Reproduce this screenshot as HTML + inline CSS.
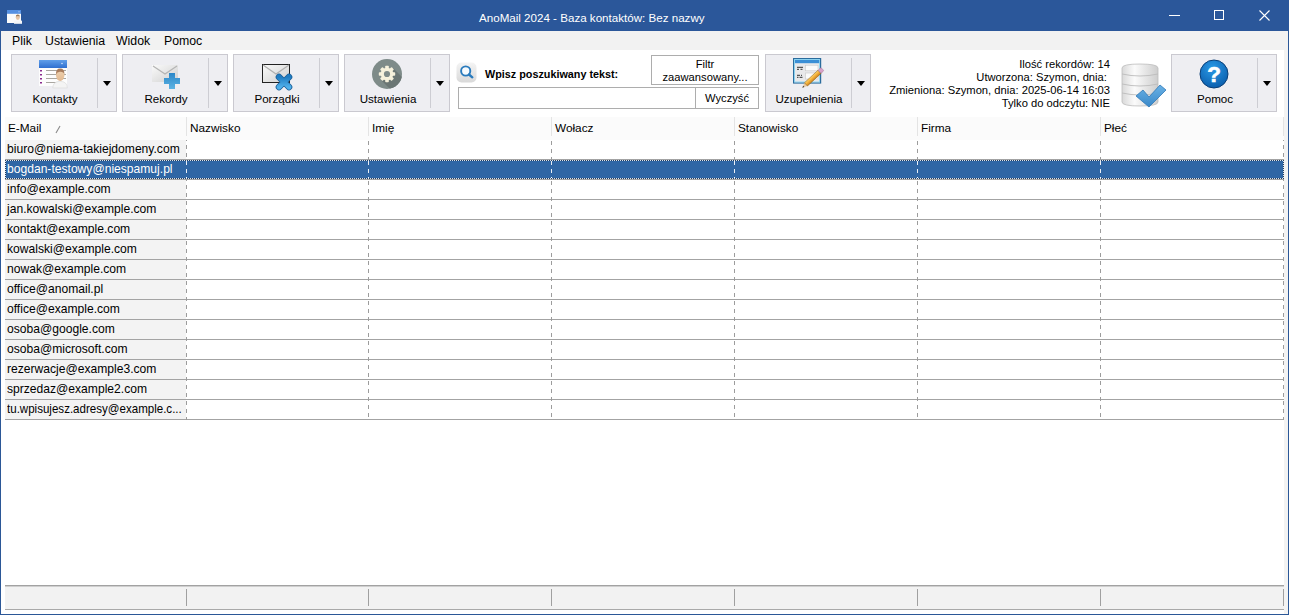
<!DOCTYPE html>
<html><head><meta charset="utf-8">
<style>
*{margin:0;padding:0;box-sizing:border-box}
html,body{width:1289px;height:615px;overflow:hidden;background:#fff;font-family:"Liberation Sans",sans-serif;color:#000}
.a{position:absolute}
#win{position:absolute;left:0;top:0;width:1289px;height:615px;background:#fff;border-left:1px solid #2b5797;border-right:1px solid #2b5797;border-bottom:1px solid #2b5797}
#title{left:0;top:0;width:1289px;height:31px;background:#2b579a}
.tt{color:#fff;font-size:11.6px;white-space:nowrap}
#menu{left:1px;top:31px;width:1287px;height:19px;background:#f2f2f2}
.mi{font-size:12.3px;top:2.5px;white-space:nowrap}
#tool{left:1px;top:50px;width:1283px;height:66px;background:#fff}
.btn{position:absolute;top:54px;width:106px;height:58px;background:#eeeef2;border:1px solid #cac9d0}
.btn .sep{position:absolute;left:85px;top:3px;width:1px;height:50px;background:#cdcdd3}
.btn .arr{position:absolute;left:90.5px;top:26px;width:0;height:0;border-left:4.5px solid transparent;border-right:4.5px solid transparent;border-top:5px solid #000}
.btn .lbl{position:absolute;left:0;width:86px;top:36.5px;text-align:center;font-size:11.6px;white-space:nowrap}
.btn svg{position:absolute}
.info{font-size:11.2px;text-align:right;white-space:nowrap;line-height:13px}
.grid{left:5px;top:117px;width:1279px}
.hdr{position:absolute;top:0;height:23px;background:#fcfcfc}
.ht{position:absolute;font-size:11.8px;top:4px;white-space:nowrap}
.row{position:absolute;left:5px;width:1279px;height:20px}
.cell{position:absolute;font-size:12.1px;white-space:nowrap}
</style></head><body>
<div id="win"></div>
<div id="title" class="a">
  <svg class="a" style="left:7px;top:10px" width="16" height="15" viewBox="0 0 16 15">
    <rect x="0" y="0" width="14" height="13" fill="#fbfbfb"/>
    <rect x="0" y="0" width="14" height="3.8" fill="#5590e2"/>
    <rect x="11.5" y="1.3" width="1" height="1" fill="#cfe0f8"/>
    <ellipse cx="10.8" cy="7.3" rx="2" ry="2.6" fill="#e6c4a4"/>
    <path d="M8.8 6.6 Q8.8 4.5 10.8 4.5 Q12.8 4.5 12.8 6.6 Q11 5.6 8.8 6.6Z" fill="#9a7a5a"/>
    <rect x="7" y="10.6" width="8" height="3.2" fill="#f4f6f8"/>
  </svg>
  <div class="a tt" style="left:479px;top:11px">AnoMail 2024 - Baza kontaktów: Bez nazwy</div>
  <div class="a" style="left:1169px;top:15px;width:11px;height:1px;background:#fff"></div>
  <div class="a" style="left:1214px;top:10px;width:10px;height:10px;border:1px solid #fff"></div>
  <svg class="a" style="left:1259px;top:10px" width="11" height="11" viewBox="0 0 11 11"><path d="M0.5 0.5L10.5 10.5M10.5 0.5L0.5 10.5" stroke="#fff" stroke-width="1.1"/></svg>
</div>
<div id="menu" class="a">
  <div class="a mi" style="left:11px">Plik</div>
  <div class="a mi" style="left:44px">Ustawienia</div>
  <div class="a mi" style="left:115px">Widok</div>
  <div class="a mi" style="left:163px">Pomoc</div>
</div>
<div id="tool" class="a"></div>

<div class="btn" style="left:11px"><div class="sep"></div><div class="arr"></div><div class="lbl">Kontakty</div></div>
<div class="btn" style="left:122px"><div class="sep"></div><div class="arr"></div><div class="lbl">Rekordy</div></div>
<div class="btn" style="left:233px"><div class="sep"></div><div class="arr"></div><div class="lbl">Porządki</div></div>
<div class="btn" style="left:344px"><div class="sep"></div><div class="arr"></div><div class="lbl">Ustawienia</div></div>
<div class="btn" style="left:765px"><div class="sep"></div><div class="arr"></div><div class="lbl">Uzupełnienia</div></div>
<div class="btn" style="left:1171px"><div class="sep"></div><div class="arr"></div><div class="lbl">Pomoc</div></div>

<!-- Kontakty icon -->
<svg class="a" style="left:38px;top:59px" width="32" height="32" viewBox="0 0 32 32">
  <defs><linearGradient id="kb" x1="0" y1="0" x2="0" y2="1"><stop offset="0" stop-color="#619fe9"/><stop offset="1" stop-color="#2f6fd0"/></linearGradient>
  <linearGradient id="face" x1="0" y1="0" x2="0" y2="1"><stop offset="0" stop-color="#efd2b0"/><stop offset="1" stop-color="#e2b991"/></linearGradient></defs>
  <rect x="1" y="1" width="28" height="8" fill="url(#kb)"/>
  <circle cx="24" cy="4.5" r="0.8" fill="#cfe2fa"/>
  <rect x="1" y="9" width="28" height="18" fill="#fdfdfd"/>
  <g fill="#8a2a8e"><rect x="2" y="11" width="2" height="1.5"/><rect x="2" y="15" width="2" height="1.5"/><rect x="2" y="19" width="2" height="1.5"/><rect x="2" y="23" width="2" height="1.5"/></g>
  <g fill="#a9a6a0"><rect x="8" y="11" width="20" height="1"/><rect x="8" y="15" width="20" height="1"/><rect x="8" y="19" width="20" height="1"/><rect x="8" y="23" width="12" height="1"/></g>
  <path d="M14.8 29 Q14.8 22.5 22 22.3 Q29.3 22.5 29.3 29Z" fill="#f4f4f4" stroke="#d8d8d8" stroke-width="0.6"/>
  <ellipse cx="22.2" cy="16.3" rx="4.2" ry="5.6" fill="url(#face)"/>
  <path d="M18 15.5 Q17.8 9.6 22.2 9.6 Q26.6 9.6 26.4 15.5 Q25.5 12.6 22.2 12.8 Q19 12.6 18 15.5Z" fill="#a97c5c"/>
</svg>
<!-- Rekordy icon -->
<svg class="a" style="left:150px;top:63px" width="32" height="28" viewBox="0 0 32 28">
  <defs><linearGradient id="env" x1="0" y1="0" x2="1" y2="1"><stop offset="0" stop-color="#fafafa"/><stop offset="1" stop-color="#cfcfcf"/></linearGradient>
  <linearGradient id="plus" x1="0" y1="0" x2="0" y2="1"><stop offset="0" stop-color="#2a86c8"/><stop offset="1" stop-color="#5db3e3"/></linearGradient></defs>
  <rect x="2" y="2" width="26" height="17" fill="url(#env)"/>
  <path d="M3 3 L15 11 L27 3" fill="none" stroke="#b4b4b4" stroke-width="1.2"/>
  <path d="M19 10h6v5h5v6h-5v5h-6v-5h-5v-6h5z" fill="url(#plus)"/>
</svg>
<!-- Porzadki icon -->
<svg class="a" style="left:260px;top:62px" width="34" height="30" viewBox="0 0 34 30">
  <rect x="2.5" y="2.5" width="27" height="18" fill="url(#env)" stroke="#222" stroke-width="1"/>
  <path d="M3 3 L16 12 L29 3" fill="none" stroke="#b0b0b0" stroke-width="1.2"/>
  <defs><linearGradient id="xg" x1="0" y1="0" x2="0" y2="1"><stop offset="0" stop-color="#1f7cc2"/><stop offset="1" stop-color="#4fb0ea"/></linearGradient></defs>
  <path d="M19 15 L29 25 M29 15 L19 25" stroke="#1a5f99" stroke-width="6.6" stroke-linecap="round"/>
  <path d="M19 15 L29 25 M29 15 L19 25" stroke="url(#xg)" stroke-width="5" stroke-linecap="round"/>
</svg>
<!-- Ustawienia icon -->
<svg class="a" style="left:371px;top:58px" width="32" height="32" viewBox="0 0 32 32">
  <defs><clipPath id="cc"><circle cx="16" cy="16" r="15"/></clipPath></defs>
  <circle cx="16" cy="16" r="15" fill="#7e8b89"/>
  <path d="M22 10 L40 28 L28 40 L10 22Z" fill="#6b7674" clip-path="url(#cc)"/>
  <g transform="translate(16 16)" fill="#f6f1dc">
    <circle r="6.3"/>
    <rect x="-1.8" y="-8.2" width="3.6" height="16.4" rx="0.8"/>
    <rect x="-8.2" y="-1.8" width="16.4" height="3.6" rx="0.8"/>
    <rect x="-1.8" y="-8.2" width="3.6" height="16.4" rx="0.8" transform="rotate(45)"/>
    <rect x="-1.8" y="-8.2" width="3.6" height="16.4" rx="0.8" transform="rotate(-45)"/>
  </g>
  <circle cx="16" cy="16" r="3.1" fill="#7e8b89"/>
</svg>
<!-- Search icon -->
<svg class="a" style="left:456px;top:62px" width="22" height="21" viewBox="0 0 22 21">
  <defs><linearGradient id="sg" x1="0" y1="0" x2="0" y2="1"><stop offset="0" stop-color="#f4f4f4"/><stop offset="1" stop-color="#d9d9d9"/></linearGradient></defs>
  <rect x="0.5" y="0.5" width="20" height="20" rx="5" fill="url(#sg)"/>
  <circle cx="9.7" cy="9" r="4.6" fill="#f7fbfe" stroke="#2a7bbd" stroke-width="1.9"/>
  <path d="M13 12.5 L16.3 15.3" stroke="#2a7bbd" stroke-width="2.4" stroke-linecap="round"/>
</svg>
<div class="a" style="left:485px;top:68px;font-size:10.8px;font-weight:bold;white-space:nowrap">Wpisz poszukiwany tekst:</div>
<div class="a" style="left:651px;top:55px;width:108px;height:30px;border:1px solid #adadad;background:#fff"></div>
<div class="a" style="left:651px;top:58px;width:108px;text-align:center;font-size:11.2px;line-height:12.5px">Filtr<br>zaawansowany...</div>
<div class="a" style="left:458px;top:87px;width:301px;height:22px;border:1px solid #adadad;background:#fff"></div>
<div class="a" style="left:695px;top:88px;width:1px;height:20px;background:#adadad"></div>
<div class="a" style="left:696px;top:92px;width:62px;text-align:center;font-size:11.2px">Wyczyść</div>
<!-- Uzupelnienia icon -->
<svg class="a" style="left:792px;top:57px" width="34" height="34" viewBox="0 0 34 34">
  <defs><linearGradient id="pen" x1="0" y1="0" x2="0" y2="1"><stop offset="0" stop-color="#fbd46a"/><stop offset="0.5" stop-color="#f3ad38"/><stop offset="1" stop-color="#c9841e"/></linearGradient></defs>
  <rect x="1.6" y="1.6" width="27" height="24.4" fill="#e9e9eb" stroke="#2b6c9d" stroke-width="1.2"/>
  <rect x="2.6" y="2.6" width="25" height="22.4" fill="none" stroke="#7fd3f5" stroke-width="0.8"/>
  <rect x="3" y="3" width="24.2" height="3.2" fill="#3b8fd6"/>
  <rect x="13.5" y="8.2" width="12.5" height="5.6" fill="#fbfbfb" stroke="#c9c9c9" stroke-width="0.6"/>
  <rect x="13.5" y="16" width="12.5" height="6" fill="#fbfbfb" stroke="#c9c9c9" stroke-width="0.6"/>
  <g fill="#333"><rect x="5" y="9.8" width="6" height="1"/><rect x="5" y="11.8" width="2" height="1"/><rect x="8.5" y="11.8" width="2" height="1"/><rect x="5" y="17.8" width="3" height="1"/><rect x="9" y="17.8" width="1" height="1"/><rect x="5" y="19.8" width="1.5" height="1"/><rect x="7.5" y="19.8" width="3" height="1"/></g>
  <g transform="translate(10.3 30.8) rotate(-42.9)">
    <path d="M0 0 L5 -2.2 L5 2.2Z" fill="#e8c9a0"/>
    <path d="M0 0 L2 -0.9 L2 0.9Z" fill="#333"/>
    <rect x="5" y="-2.2" width="18.5" height="4.4" fill="url(#pen)" stroke="#8a5a12" stroke-width="0.5"/>
    <rect x="23.5" y="-2.2" width="4" height="4.4" rx="1" fill="#d8a0c8" stroke="#9a6a8a" stroke-width="0.4"/>
  </g>
</svg>
<!-- info -->
<div class="a info" style="left:849px;width:261px;top:58px">Ilość rekordów: 14<br>Utworzona: Szymon, dnia:&nbsp;<br>Zmieniona: Szymon, dnia: 2025-06-14 16:03<br>Tylko do odczytu: NIE</div>
<!-- DB icon -->
<svg class="a" style="left:1120px;top:62px" width="48" height="48" viewBox="0 0 48 48">
  <defs><linearGradient id="db" x1="0" y1="0" x2="1" y2="0"><stop offset="0" stop-color="#d9d9d9"/><stop offset="0.35" stop-color="#fbfbfb"/><stop offset="1" stop-color="#cdcdcd"/></linearGradient>
  <linearGradient id="ck" x1="0" y1="0" x2="0" y2="1"><stop offset="0" stop-color="#6ab2e6"/><stop offset="1" stop-color="#3a88c8"/></linearGradient></defs>
  <path d="M2 6 Q2 2 20 2 Q38 2 38 6 L38 40 Q38 44 20 44 Q2 44 2 40Z" fill="url(#db)" stroke="#bdbdbd" stroke-width="0.8"/>
  <g fill="none" stroke="#bcbcbc" stroke-width="0.9"><path d="M2 12 Q20 16 38 12"/><path d="M2 22 Q20 26 38 22"/><path d="M2 31 Q20 35 38 31"/></g>
  <path d="M16 34 L23 28 L29 35 L40 23 L46 28 L29 45Z" fill="url(#ck)" stroke="#2f78b8" stroke-width="0.8"/>
</svg>
<!-- Pomoc icon -->
<svg class="a" style="left:1199px;top:59px" width="30" height="30" viewBox="0 0 30 30">
  <defs><radialGradient id="qb" cx="0.45" cy="0.3" r="0.7"><stop offset="0" stop-color="#2a9ae6"/><stop offset="1" stop-color="#0b5fae"/></radialGradient></defs>
  <circle cx="15" cy="15" r="14" fill="url(#qb)" stroke="#0a3f78" stroke-width="1"/>
  <text x="15" y="23.3" text-anchor="middle" font-family="Liberation Sans" font-weight="bold" font-size="22.5" fill="#fff" stroke="#fff" stroke-width="0.6">?</text>
</svg>

<div class="a" style="left:5px;top:117px;width:1279px;height:23px;background:#fbfbfb"></div>
<div class="a ht" style="left:8px;top:121px">E-Mail</div>
<div class="a ht" style="left:190px;top:121px">Nazwisko</div>
<div class="a ht" style="left:372px;top:121px">Imię</div>
<div class="a ht" style="left:555px;top:121px">Wołacz</div>
<div class="a ht" style="left:738px;top:121px">Stanowisko</div>
<div class="a ht" style="left:921px;top:121px">Firma</div>
<div class="a ht" style="left:1104px;top:121px">Płeć</div>
<div class="a" style="left:186px;top:117px;width:1px;height:19px;background:#e4e4e4"></div>
<div class="a" style="left:368px;top:117px;width:1px;height:19px;background:#e4e4e4"></div>
<div class="a" style="left:551px;top:117px;width:1px;height:19px;background:#e4e4e4"></div>
<div class="a" style="left:734px;top:117px;width:1px;height:19px;background:#e4e4e4"></div>
<div class="a" style="left:917px;top:117px;width:1px;height:19px;background:#e4e4e4"></div>
<div class="a" style="left:1100px;top:117px;width:1px;height:19px;background:#e4e4e4"></div>
<div class="a" style="left:1283px;top:117px;width:1px;height:19px;background:#e4e4e4"></div>
<svg class="a" style="left:55px;top:125px" width="6" height="9" viewBox="0 0 6 9"><path d="M1 8 L5 1" stroke="#8a8a8a" stroke-width="1.1"/></svg>
<div class="a" style="left:5px;top:140px;width:181px;height:280px;background:#f3f3f3"></div>
<div class="a" style="left:5px;top:159px;width:1279px;height:1px;background:#a3a3a3"></div>
<div class="a" style="left:5px;top:179px;width:1279px;height:1px;background:#a3a3a3"></div>
<div class="a" style="left:5px;top:199px;width:1279px;height:1px;background:#a3a3a3"></div>
<div class="a" style="left:5px;top:219px;width:1279px;height:1px;background:#a3a3a3"></div>
<div class="a" style="left:5px;top:239px;width:1279px;height:1px;background:#a3a3a3"></div>
<div class="a" style="left:5px;top:259px;width:1279px;height:1px;background:#a3a3a3"></div>
<div class="a" style="left:5px;top:279px;width:1279px;height:1px;background:#a3a3a3"></div>
<div class="a" style="left:5px;top:299px;width:1279px;height:1px;background:#a3a3a3"></div>
<div class="a" style="left:5px;top:319px;width:1279px;height:1px;background:#a3a3a3"></div>
<div class="a" style="left:5px;top:339px;width:1279px;height:1px;background:#a3a3a3"></div>
<div class="a" style="left:5px;top:359px;width:1279px;height:1px;background:#a3a3a3"></div>
<div class="a" style="left:5px;top:379px;width:1279px;height:1px;background:#a3a3a3"></div>
<div class="a" style="left:5px;top:399px;width:1279px;height:1px;background:#a3a3a3"></div>
<div class="a" style="left:5px;top:419px;width:1279px;height:1px;background:#a3a3a3"></div>
<div class="a" style="left:186px;top:140px;width:1px;height:280px;background:linear-gradient(#9c9c9c 0 4px,transparent 4px 8px) 0 5px/1px 8px repeat-y"></div>
<div class="a" style="left:368px;top:140px;width:1px;height:280px;background:linear-gradient(#9c9c9c 0 4px,transparent 4px 8px) 0 1px/1px 8px repeat-y"></div>
<div class="a" style="left:551px;top:140px;width:1px;height:280px;background:linear-gradient(#9c9c9c 0 4px,transparent 4px 8px) 0 1px/1px 8px repeat-y"></div>
<div class="a" style="left:734px;top:140px;width:1px;height:280px;background:linear-gradient(#9c9c9c 0 4px,transparent 4px 8px) 0 1px/1px 8px repeat-y"></div>
<div class="a" style="left:917px;top:140px;width:1px;height:280px;background:linear-gradient(#9c9c9c 0 4px,transparent 4px 8px) 0 1px/1px 8px repeat-y"></div>
<div class="a" style="left:1100px;top:140px;width:1px;height:280px;background:linear-gradient(#9c9c9c 0 4px,transparent 4px 8px) 0 1px/1px 8px repeat-y"></div>
<div class="a" style="left:1283px;top:140px;width:1px;height:280px;background:linear-gradient(#9c9c9c 0 4px,transparent 4px 8px) 0 5px/1px 8px repeat-y"></div>
<div class="a" style="left:5px;top:160px;width:1279px;height:19px;background:#2f66a5"></div>
<div class="a" style="left:5px;top:160px;width:1279px;height:1px;background:linear-gradient(90deg,#213d60 0 1px,#dce4ed 1px 2px) 0 0/2px 1px repeat-x"></div>
<div class="a" style="left:5px;top:178px;width:1279px;height:1px;background:linear-gradient(90deg,#213d60 0 1px,#dce4ed 1px 2px) 0 0/2px 1px repeat-x"></div>
<div class="a" style="left:5px;top:160px;width:1px;height:19px;background:linear-gradient(#213d60 0 1px,#dce4ed 1px 2px) 0 0/1px 2px repeat-y"></div>
<div class="a" style="left:1283px;top:160px;width:1px;height:19px;background:linear-gradient(#213d60 0 1px,#dce4ed 1px 2px) 0 0/1px 2px repeat-y"></div>

<div class="a" style="left:186px;top:161px;width:1px;height:17px;background:linear-gradient(#e8eef6 0 4px,transparent 4px 8px) 0 0px/1px 8px repeat-y"></div>
<div class="a" style="left:368px;top:161px;width:1px;height:17px;background:linear-gradient(#e8eef6 0 4px,transparent 4px 8px) 0 0px/1px 8px repeat-y"></div>
<div class="a" style="left:551px;top:161px;width:1px;height:17px;background:linear-gradient(#e8eef6 0 4px,transparent 4px 8px) 0 0px/1px 8px repeat-y"></div>
<div class="a" style="left:734px;top:161px;width:1px;height:17px;background:linear-gradient(#e8eef6 0 4px,transparent 4px 8px) 0 0px/1px 8px repeat-y"></div>
<div class="a" style="left:917px;top:161px;width:1px;height:17px;background:linear-gradient(#e8eef6 0 4px,transparent 4px 8px) 0 0px/1px 8px repeat-y"></div>
<div class="a" style="left:1100px;top:161px;width:1px;height:17px;background:linear-gradient(#e8eef6 0 4px,transparent 4px 8px) 0 0px/1px 8px repeat-y"></div>
<div class="a cell" style="left:7px;top:142px;color:#000">biuro@niema-takiejdomeny.com</div>
<div class="a cell" style="left:7px;top:162px;color:#fff">bogdan-testowy@niespamuj.pl</div>
<div class="a cell" style="left:7px;top:182px;color:#000">info@example.com</div>
<div class="a cell" style="left:7px;top:202px;color:#000">jan.kowalski@example.com</div>
<div class="a cell" style="left:7px;top:222px;color:#000">kontakt@example.com</div>
<div class="a cell" style="left:7px;top:242px;color:#000">kowalski@example.com</div>
<div class="a cell" style="left:7px;top:262px;color:#000">nowak@example.com</div>
<div class="a cell" style="left:7px;top:282px;color:#000">office@anomail.pl</div>
<div class="a cell" style="left:7px;top:302px;color:#000">office@example.com</div>
<div class="a cell" style="left:7px;top:322px;color:#000">osoba@google.com</div>
<div class="a cell" style="left:7px;top:342px;color:#000">osoba@microsoft.com</div>
<div class="a cell" style="left:7px;top:362px;color:#000">rezerwacje@example3.com</div>
<div class="a cell" style="left:7px;top:382px;color:#000">sprzedaz@example2.com</div>
<div class="a cell" style="left:7px;top:402px;color:#000"><span style="display:inline-block;transform:scaleX(0.955);transform-origin:0 0">tu.wpisujesz.adresy@example.c...</span></div>
<div class="a" style="left:5px;top:585px;width:1279px;height:1px;background:#a2a2a2"></div>
<div class="a" style="left:5px;top:586px;width:1279px;height:1px;background:#cfcfcf"></div>
<div class="a" style="left:5px;top:587px;width:1279px;height:22px;background:#f2f2f2"></div>
<div class="a" style="left:5px;top:609px;width:1279px;height:1px;background:#a9a9a9"></div>
<div class="a" style="left:186px;top:589px;width:1px;height:17px;background:#a0a0a0"></div>
<div class="a" style="left:368px;top:589px;width:1px;height:17px;background:#a0a0a0"></div>
<div class="a" style="left:551px;top:589px;width:1px;height:17px;background:#a0a0a0"></div>
<div class="a" style="left:734px;top:589px;width:1px;height:17px;background:#a0a0a0"></div>
<div class="a" style="left:917px;top:589px;width:1px;height:17px;background:#a0a0a0"></div>
<div class="a" style="left:1100px;top:589px;width:1px;height:17px;background:#a0a0a0"></div>
<div class="a" style="left:1283px;top:589px;width:1px;height:17px;background:#a0a0a0"></div>
<div class="a" style="left:1284px;top:50px;width:4px;height:564px;background:#f3f3f3"></div>
</body></html>
